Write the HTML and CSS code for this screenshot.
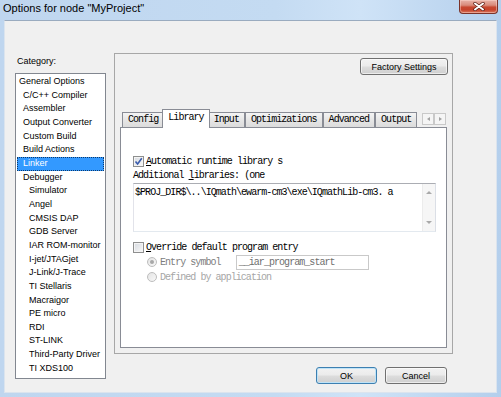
FILE: index.html
```html
<!DOCTYPE html>
<html lang="en">
<head>
  <meta charset="utf-8" />
  <title>Options for node "MyProject"</title>
  <link rel="stylesheet" href="styles.css">
</head>
<body>
  <div class="window">
    <div class="titlebar">
      <span class="title">Options for node "MyProject"</span>
      <div class="close">
        <svg width="12" height="9" viewBox="0 0 12 9">
          <path d="M2 1.5 L10 7.5 M10 1.5 L2 7.5" stroke="#5a1a12" stroke-width="3.4" stroke-linecap="round" />
          <path d="M2 1.5 L10 7.5 M10 1.5 L2 7.5" stroke="#fff" stroke-width="2" stroke-linecap="round" />
        </svg>
      </div>
    </div>

    <div class="client">
      <div class="category">
        <div class="category-label">Category:</div>
        <ul class="category-list">
          <li class="lvl0">General Options</li>
          <li class="lvl1">C/C++ Compiler</li>
          <li class="lvl1">Assembler</li>
          <li class="lvl1">Output Converter</li>
          <li class="lvl1">Custom Build</li>
          <li class="lvl1">Build Actions</li>
          <li class="lvl1 selected">Linker</li>
          <li class="lvl1">Debugger</li>
          <li class="lvl2">Simulator</li>
          <li class="lvl2">Angel</li>
          <li class="lvl2">CMSIS DAP</li>
          <li class="lvl2">GDB Server</li>
          <li class="lvl2">IAR ROM-monitor</li>
          <li class="lvl2">I-jet/JTAGjet</li>
          <li class="lvl2">J-Link/J-Trace</li>
          <li class="lvl2">TI Stellaris</li>
          <li class="lvl2">Macraigor</li>
          <li class="lvl2">PE micro</li>
          <li class="lvl2">RDI</li>
          <li class="lvl2">ST-LINK</li>
          <li class="lvl2">Third-Party Driver</li>
          <li class="lvl2">TI XDS100</li>
        </ul>
      </div>

      <div class="main">
        <div class="group">
          <button class="btn factory">Factory Settings</button>

          <div class="tabs">
            <div class="tab">Config</div>
            <div class="tab active">Library</div>
            <div class="tab">Input</div>
            <div class="tab">Optimizations</div>
            <div class="tab">Advanced</div>
            <div class="tab">Output</div>
            <div class="tab-arrows">
              <div class="arrow-btn"><span class="tri-left"></span></div>
              <div class="arrow-btn"><span class="tri-right"></span></div>
            </div>
          </div>

          <div class="tab-panel">
            <div class="check-row">
              <span class="check">
                <svg width="9" height="9" viewBox="0 0 9 9">
                  <path d="M1.5 4.5 L3.6 7 L7.8 1.2" fill="none" stroke="#3a5cad" stroke-width="1.6" />
                </svg>
              </span>
              <span><u>A</u>utomatic runtime library s</span>
            </div>
            <div class="field-label">Additional <u>l</u>ibraries: (one</div>
            <div class="textbox">
              <div class="textbox-text">$PROJ_DIR$\..\IQmath\ewarm-cm3\exe\IQmathLib-cm3. a</div>
              <div class="vscroll">
                <span class="tri-up"></span>
                <span class="tri-down"></span>
              </div>
            </div>
            <div class="check-row second">
              <span class="check"></span>
              <span><u>O</u>verride default program entry</span>
            </div>
            <div class="radio-row">
              <span class="radio on"></span>
              <span class="dim">Entry symbol</span>
              <div class="entry-field">__iar_program_start</div>
            </div>
            <div class="radio-row last">
              <span class="radio"></span>
              <span class="dimmer">Defined by application</span>
            </div>
          </div>
        </div>

        <div class="dialog-buttons">
          <button class="btn btn-default">OK</button>
          <button class="btn cancel">Cancel</button>
        </div>
      </div>
    </div>
  </div>
</body>
</html>
```

FILE: styles.css
```css
* {
  box-sizing: border-box;
}

body {
  margin: 0;
  font-family: "Liberation Sans", Arial, sans-serif;
  font-size: 9px;
  color: #000;
}

.window {
  width: 501px;
  height: 397px;
  display: flex;
  flex-direction: column;
  background: linear-gradient(90deg, #bfd6ef 0%, #c4dbf2 55%, #cfe3f7 72%, #b4cfec 100%);
}

.titlebar {
  height: 20px;
  flex: none;
  display: flex;
  align-items: flex-start;
}

.title {
  padding: 1px 0 0 3px;
  font-size: 11px;
  line-height: 14px;
}

.close {
  margin-left: auto;
  margin-right: 3px;
  width: 39px;
  height: 14px;
  border: 1px solid #7b3329;
  border-top: none;
  border-radius: 0 0 4px 4px;
  background: linear-gradient(#e8b3a8 0%, #d98a7a 40%, #c8472f 55%, #c5422b 75%, #d9785d 100%);
  box-shadow: inset 0 0 0 1px rgba(255, 220, 210, 0.45);
  display: flex;
  align-items: center;
  justify-content: center;
}

.client {
  flex: 1;
  margin: 0 4px 4px;
  border: 1px solid #dbe4ee;
  border-top-color: #9aabbf;
  background: #f0f0f0;
  display: flex;
}

/* category list */
.category {
  flex: none;
  width: 91px;
  margin-left: 10px;
  padding-top: 34px;
}

.category-label {
  padding-left: 2px;
  line-height: 12px;
  margin-bottom: 6px;
}

.category-list {
  list-style: none;
  margin: 0;
  padding: 1px 0 0;
  height: 306px;
  border: 1px solid #828790;
  background: #fff;
  overflow: hidden;
}

.category-list li {
  margin: 0 1px;
  line-height: 13.65px;
  white-space: nowrap;
}

.lvl0 { padding-left: 2px; }
.lvl1 { padding-left: 6px; }
.lvl2 { padding-left: 12px; }

.category-list .selected {
  background: #3399ff;
  color: #fff;
  outline: 1px dotted #0d3a6b;
  outline-offset: -1px;
}

/* right side */
.main {
  margin-left: 8px;
  padding-top: 32px;
  display: flex;
  flex-direction: column;
}

.group {
  width: 339px;
  height: 301px;
  border: 1px solid #a7a7a7;
  padding: 4px 4px 5px 5px;
  display: flex;
  flex-direction: column;
}

.btn {
  height: 17px;
  padding: 0;
  font-family: "Liberation Sans", Arial, sans-serif;
  font-size: 9px;
  color: #000;
  border: 1px solid #707070;
  border-radius: 3px;
  background: linear-gradient(#f2f2f2 0%, #ebebeb 48%, #dddddd 52%, #cfcfcf 100%);
  box-shadow: inset 0 0 0 1px rgba(255, 255, 255, 0.6);
}

.factory {
  align-self: flex-end;
  width: 88px;
}

.tabs {
  margin-top: 34px;
  height: 18px;
  padding-left: 2px;
  display: flex;
  align-items: flex-end;
  position: relative;
  z-index: 1;
}

.tab {
  height: 15px;
  padding: 0 5px;
  border: 1px solid #898c95;
  border-bottom: none;
  background: linear-gradient(#f4f4f4, #e6e6e6 50%, #dcdcdc);
  font-family: "Liberation Mono", "Courier New", monospace;
  font-size: 10px;
  letter-spacing: -0.95px;
  line-height: 14px;
  white-space: nowrap;
}

.tab.active {
  height: 19px;
  margin: 0 -2px -1px;
  background: #fff;
  line-height: 16px;
  position: relative;
  z-index: 2;
}

.tab-arrows {
  margin-left: auto;
  margin-right: 2px;
  margin-bottom: 2px;
  display: flex;
}

.arrow-btn {
  width: 12px;
  height: 12px;
  border: 1px solid #c9c9c9;
  background: #f5f5f5;
  display: flex;
  align-items: center;
  justify-content: center;
}

.tri-left,
.tri-right,
.tri-up,
.tri-down {
  width: 0;
  height: 0;
  border: 2px solid transparent;
}

.tri-left { border-right: 3px solid #a2a2a2; border-left: none; }
.tri-right { border-left: 3px solid #a2a2a2; border-right: none; }
.tri-up { border-bottom: 3px solid #a9a9a9; border-top: none; border-width: 0 3px 3px; }
.tri-down { border-top: 3px solid #a9a9a9; border-bottom: none; border-width: 3px 3px 0; }

.tab-panel {
  flex: 1;
  margin-right: 1px;
  padding: 26px 10px 0 12px;
  border: 1px solid #898c95;
  background: #fff;
  display: flex;
  flex-direction: column;
  font-family: "Liberation Mono", "Courier New", monospace;
  font-size: 10px;
  letter-spacing: -0.95px;
}

.check-row {
  height: 14px;
  display: flex;
  align-items: center;
  white-space: nowrap;
}

.check-row.second {
  height: 13px;
  margin-top: 9px;
}

.check {
  flex: none;
  width: 11px;
  height: 11px;
  margin-right: 2px;
  border: 1px solid #8e8f8f;
  background: linear-gradient(135deg, #d6dae0, #f8f8f8);
  box-shadow: inset 0 0 0 1px #f4f4f4;
  display: flex;
  align-items: center;
  justify-content: center;
}

.field-label {
  margin-top: 1px;
  line-height: 14px;
  white-space: nowrap;
}

.textbox {
  height: 49px;
  border: 1px solid #abadb3;
  border-color: #abadb3 #dbdfe6 #e3e9ef #e2e3ea;
  display: flex;
}

.textbox-text {
  flex: 1;
  padding: 2px 0 0 1px;
  line-height: 14px;
  white-space: nowrap;
  overflow: hidden;
}

.vscroll {
  width: 13px;
  padding: 7px 0 7px;
  background: #f6f6f6;
  border-left: 1px solid #ececec;
  display: flex;
  flex-direction: column;
  justify-content: space-between;
  align-items: center;
}

.radio-row {
  height: 16px;
  padding-left: 14px;
  display: flex;
  align-items: center;
  white-space: nowrap;
}

.radio-row.last {
  height: 14px;
}

.radio {
  flex: none;
  width: 10px;
  height: 10px;
  margin-right: 3px;
  border: 1px solid #bdbdbd;
  border-radius: 50%;
  background: linear-gradient(135deg, #e4e4e4, #f8f8f8);
  display: flex;
  align-items: center;
  justify-content: center;
}

.radio.on::after {
  content: "";
  width: 4px;
  height: 4px;
  border-radius: 50%;
  background: #a8a8a8;
}

.dim {
  color: #7d7d7d;
}

.dimmer {
  color: #a6a6a6;
}

.entry-field {
  width: 133px;
  height: 15px;
  margin-left: 15px;
  padding-left: 2px;
  border: 1px solid #c9c9c9;
  color: #6f6f6f;
  line-height: 13px;
}

.dialog-buttons {
  margin-top: 13px;
  padding-right: 6px;
  display: flex;
  justify-content: flex-end;
  gap: 8px;
}

.btn-default {
  width: 61px;
  border-color: #3c7fb1;
  box-shadow: inset 0 0 0 1px #bfe3f7;
}

.cancel {
  width: 62px;
}
```
